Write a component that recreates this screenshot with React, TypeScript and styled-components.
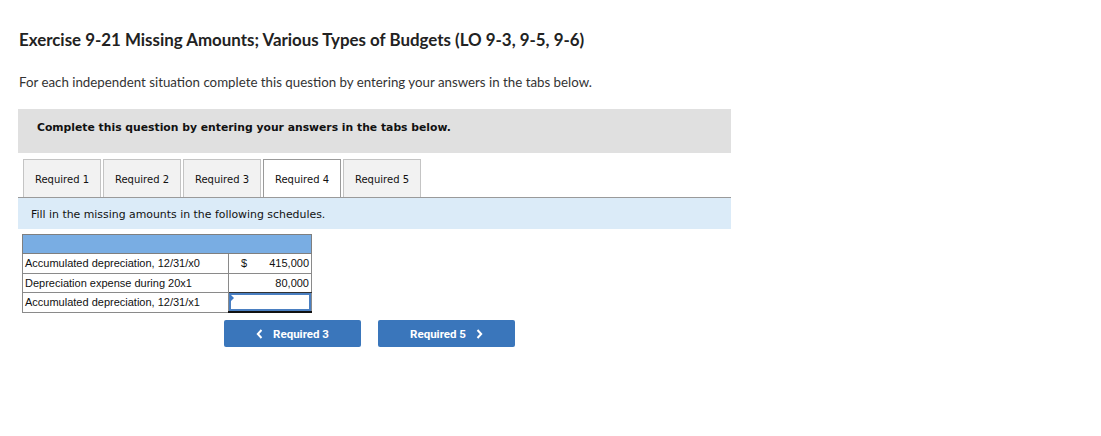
import * as React from "react";
import styled, { createGlobalStyle } from "styled-components";

const GlobalStyle = createGlobalStyle`
  html, body {
    margin: 0;
    padding: 0;
    background: #ffffff;
  }
  body {
    font-family: "Lato", "Open Sans", sans-serif;
    color: #222222;
  }
`;

const Page = styled.div`
  width: 1101px;
  height: 436px;
  padding: 30px 0 0 18px;
  box-sizing: border-box;
`;

const Title = styled.h1`
  margin: 0 0 0 1px;
  font-family: "Lato", sans-serif;
  font-size: 16.9px;
  line-height: 20px;
  font-weight: 700;
  color: #222222;
`;

const Intro = styled.p`
  margin: 24px 0 0 1px;
  font-family: "Lato", sans-serif;
  font-size: 13.3px;
  line-height: 16px;
  color: #333333;
`;

const Frame = styled.div`
  width: 713px;
  margin-top: 19px;
`;

const Notice = styled.div`
  height: 44px;
  background: #e0e0e0;
  display: flex;
  align-items: center;
  padding-left: 19px;
  padding-bottom: 8px;
  box-sizing: border-box;
  font-family: "DejaVu Sans", Verdana, sans-serif;
  font-weight: 700;
  font-size: 10.8px;
  color: #111111;
`;

const TabBar = styled.div`
  display: flex;
  gap: 2px;
  margin-top: 6px;
  padding-left: 5px;
  border-bottom: 1px solid #9a9a9a;
`;

const Tab = styled.div<{ $active?: boolean }>`
  width: 78px;
  height: 38px;
  box-sizing: border-box;
  display: flex;
  align-items: center;
  justify-content: center;
  background: ${(p) => (p.$active ? "#ffffff" : "#f2f2f2")};
  border: 1px solid ${(p) => (p.$active ? "#9a9a9a" : "#c4c4c4")};
  border-bottom: none;
  font-family: "DejaVu Sans", Verdana, sans-serif;
  font-size: 10px;
  color: #111111;
  padding-top: 2px;
`;

const Instruction = styled.div`
  height: 31px;
  background: #dbebf8;
  display: flex;
  align-items: center;
  padding-left: 13px;
  padding-top: 2px;
  box-sizing: border-box;
  font-family: "DejaVu Sans", Verdana, sans-serif;
  font-size: 10.9px;
  color: #111111;
`;

const Schedule = styled.table`
  margin: 5px 0 0 4px;
  border-collapse: collapse;
  font-family: "Liberation Sans", Arial, sans-serif;
  font-size: 11px;
  color: #111111;
`;

const HeadCell = styled.th`
  height: 18px;
  padding: 0;
  background: #79ade3;
  border: 1px solid #7f7f7f;
`;

const LabelCell = styled.td`
  width: 206px;
  height: 19.5px;
  padding: 0 0 0 2px;
  border: 1px solid #8a8a8a;
  box-sizing: border-box;
  line-height: 18px;
`;

const AmountCell = styled.td<{ $rule?: "single" | "double" }>`
  width: 83px;
  padding: 0;
  border: 1px solid #8a8a8a;
  border-bottom: ${(p) =>
    p.$rule === "double"
      ? "2px solid #111111"
      : p.$rule === "single"
        ? "1px solid #333333"
        : "1px solid #8a8a8a"};
  box-sizing: border-box;
`;

const Amount = styled.div`
  display: flex;
  justify-content: space-between;
  padding: 0 2px 0 12px;
  line-height: 18px;
`;

const InputBox = styled.div`
  position: relative;
  height: 18px;
  box-sizing: border-box;
  border: 2px solid #4a7fc1;
  background: #ffffff;
  &::before {
    content: "";
    position: absolute;
    left: -1px;
    top: -1px;
    border-top: 4px solid transparent;
    border-bottom: 4px solid transparent;
    border-left: 4px solid #3d78c4;
  }
`;

const Nav = styled.div`
  display: flex;
  gap: 17px;
  margin: 7px 0 0 206px;
`;

const NavButton = styled.button`
  width: 137px;
  height: 27px;
  display: flex;
  align-items: center;
  justify-content: center;
  gap: 10px;
  border: none;
  border-radius: 2px;
  background: #3a76bb;
  color: #ffffff;
  font-family: "Roboto", "Liberation Sans", sans-serif;
  font-weight: 700;
  font-size: 11.5px;
  cursor: pointer;
`;

const Chevron = ({ dir }: { dir: "left" | "right" }) => (
  <svg width="7" height="10" viewBox="0 0 7 10" aria-hidden="true">
    <path
      d={dir === "left" ? "M5.5 1 L1.8 5 L5.5 9" : "M1.5 1 L5.2 5 L1.5 9"}
      fill="none"
      stroke="#ffffff"
      strokeWidth="2"
    />
  </svg>
);

const tabs = ["Required 1", "Required 2", "Required 3", "Required 4", "Required 5"];

export default function App() {
  return (
    <Page>
      <GlobalStyle />
      <Title>Exercise 9-21 Missing Amounts; Various Types of Budgets (LO 9-3, 9-5, 9-6)</Title>
      <Intro>
        For each independent situation complete this question by entering your answers in the tabs below.
      </Intro>
      <Frame>
        <Notice>Complete this question by entering your answers in the tabs below.</Notice>
        <TabBar>
          {tabs.map((t) => (
            <Tab key={t} $active={t === "Required 4"}>
              {t}
            </Tab>
          ))}
        </TabBar>
        <Instruction>Fill in the missing amounts in the following schedules.</Instruction>
        <Schedule>
          <thead>
            <tr>
              <HeadCell colSpan={2} />
            </tr>
          </thead>
          <tbody>
            <tr>
              <LabelCell>Accumulated depreciation, 12/31/x0</LabelCell>
              <AmountCell>
                <Amount>
                  <span>$</span>
                  <span>415,000</span>
                </Amount>
              </AmountCell>
            </tr>
            <tr>
              <LabelCell>Depreciation expense during 20x1</LabelCell>
              <AmountCell $rule="single">
                <Amount>
                  <span />
                  <span>80,000</span>
                </Amount>
              </AmountCell>
            </tr>
            <tr>
              <LabelCell>Accumulated depreciation, 12/31/x1</LabelCell>
              <AmountCell $rule="double">
                <InputBox />
              </AmountCell>
            </tr>
          </tbody>
        </Schedule>
        <Nav>
          <NavButton>
            <Chevron dir="left" />
            Required 3
          </NavButton>
          <NavButton>
            Required 5
            <Chevron dir="right" />
          </NavButton>
        </Nav>
      </Frame>
    </Page>
  );
}
